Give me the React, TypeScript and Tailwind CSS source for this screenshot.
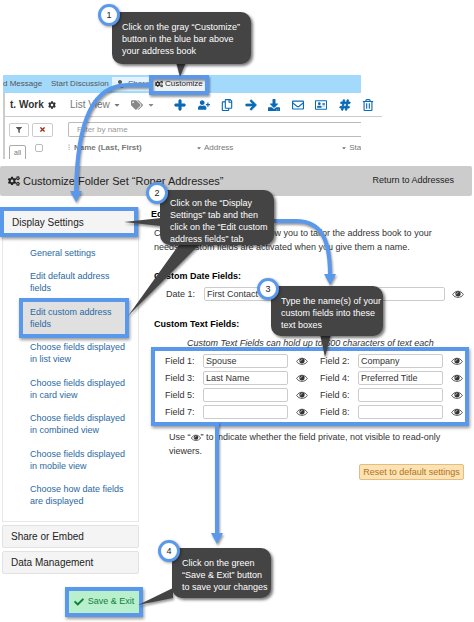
import {
  FaArrowRight,
  FaCaretDown,
  FaCheck,
  FaCog,
  FaCogs,
  FaDownload,
  FaFilter,
  FaHashtag,
  FaPlus,
  FaRegAddressCard,
  FaRegCopy,
  FaRegEnvelope,
  FaRegTrashAlt,
  FaTags,
  FaTimes,
  FaUser,
  FaUserPlus,
} from "react-icons/fa"
import clsx from "clsx"
import type { ReactNode } from "react"

const tools = [
  { label: "Add", icon: FaPlus, bold: true },
  { label: "Add person", icon: FaUserPlus },
  { label: "Copy", icon: FaRegCopy },
  { label: "Move", icon: FaArrowRight, bold: true },
  { label: "Download", icon: FaDownload },
  { label: "Email", icon: FaRegEnvelope },
  { label: "Card", icon: FaRegAddressCard },
  { label: "Number", icon: FaHashtag, bold: true },
  { label: "Delete", icon: FaRegTrashAlt },
]

const settingsLinks = [
  ["General settings"],
  ["Edit default address", "fields"],
  ["Edit custom address", "fields"],
  ["Choose fields displayed", "in list view"],
  ["Choose fields displayed", "in card view"],
  ["Choose fields displayed", "in combined view"],
  ["Choose fields displayed", "in mobile view"],
  ["Choose how date fields", "are displayed"],
]

const textFields = ["Spouse", "Company", "Last Name", "Preferred Title", "", "", "", ""]

function Eye({ className }: { className?: string }) {
  return (
    <svg viewBox="0 256 1792 1408" fill="none" className={clsx("shrink-0", className)}>
      <path d="M64 960C240 660 550 448 896 448s656 212 832 512c-176 300-486 448-832 448S240 1260 64 960z" stroke="currentColor" strokeWidth="128" />
      <circle cx="896" cy="860" r="410" fill="currentColor" />
      <path d="M690 860c0-120 90-206 206-206" stroke="#fff" strokeWidth="110" strokeLinecap="round" />
    </svg>
  )
}

function AddressBook() {
  return (
    <section className="ml-[3px] h-[84px] w-4/5 text-[#555]">
      <div className="mr-[21px] flex h-[18px] items-center bg-[#a3dafb] text-[8px] whitespace-nowrap">
        <button className="w-12 overflow-hidden text-left">d Message</button>
        <button className="w-[61px] text-left">Start Discussion</button>
        <button className="flex h-[14px] w-[37px] items-center gap-1 bg-[#e4f3fd] pl-1">
          <FaUser className="size-2 shrink-0" />
          Share
        </button>
        <button className="ml-[2px] flex h-[14px] items-center gap-[2px] bg-[#eef2f5] px-1 text-[#222]">
          <FaCogs className="size-2" />
          Customize
        </button>
      </div>
      <div className="flex h-6 items-center border-b border-l-2 border-[#ccc] pl-[5px]">
        <h2 className="flex w-[60px] items-center gap-1 text-[10px] font-bold whitespace-nowrap text-[#333]">
          t. Work <FaCog className="size-2" />
        </h2>
        <button className="flex w-[61px] items-center gap-[3px] text-[10px] whitespace-nowrap text-[#777]">
          List View <FaCaretDown className="size-2" />
        </button>
        <button aria-label="Tags" className="flex w-[43px] items-center gap-1 text-[#888]">
          <FaTags className="size-3" />
          <FaCaretDown className="size-2" />
        </button>
        <div className="flex flex-1 items-center justify-between pr-2 text-[#0a6ab6]">
          {tools.map(({ label, icon: Icon, bold }) => (
            <button key={label} aria-label={label}>
              <Icon className={clsx("size-3", bold && "stroke-[36]")} />
            </button>
          ))}
        </div>
      </div>
      <div className="mr-[21px] border-l-2 border-[#ccc]">
        <div className="flex h-[25px] items-center pl-1">
          <button aria-label="Filter" className="flex h-[14px] w-5 items-center justify-center rounded-[2px] border border-[#ccc]">
            <FaFilter className="size-[6px]" />
          </button>
          <button aria-label="Clear filter" className="ml-[3px] flex h-[14px] w-[21px] items-center justify-center rounded-[2px] border border-[#ccc] text-[#a32d12]">
            <FaTimes className="size-[7px]" />
          </button>
          <input
            aria-label="Filter by name"
            placeholder="Filter by name"
            className="ml-[15px] h-[15px] min-w-0 flex-1 rounded-l-[2px] border border-r-0 border-[#bbb] px-2 text-[8px] placeholder:text-[#999]"
          />
        </div>
        <div className="flex h-[17px] overflow-hidden pl-1 text-[8px] leading-3 whitespace-nowrap text-[#777]">
          <button className="mt-[3px] h-4 w-[17px] rounded-t-[2px] border border-[#aaa] text-[7px] leading-3">all</button>
          <input type="checkbox" aria-label="Select all" className="mt-[2px] ml-[9px] size-2 appearance-none rounded-[2px] border border-[#bbb]" />
          <span className="ml-[25px] flex w-32 gap-1 font-bold">
            <i className="font-normal not-italic">⁝</i>Name (Last, First)
          </span>
          <span className="flex flex-1 items-center gap-[2px] self-start">
            <FaCaretDown className="size-[6px]" />
            Address
          </span>
          <span className="flex items-center gap-[2px] self-start">
            <FaCaretDown className="size-[6px]" />
            Sta
          </span>
        </div>
      </div>
    </section>
  )
}

function Sidebar() {
  return (
    <aside className="flex w-[137px] shrink-0 flex-col gap-[3px]">
      <div className="flex flex-col border-x border-b border-[#e8e8e8]">
        <h2 className="-ml-[3px] flex h-[30px] items-center border-[4px] border-[#5a98ec] bg-[#f4f4f4] pl-2 text-[10px] text-[#222] shadow-[1px_2px_3px_#0006]">
          Display Settings
        </h2>
        <nav className="flex h-[284px] flex-col justify-between pt-[10px] pb-[14px] text-[9px] leading-3 whitespace-nowrap text-[#2a69a3]">
          {settingsLinks.map((lines, i) => (
            <a
              key={lines.join(" ")}
              href="#"
              className={clsx(
                i === 2
                  ? "-my-2 ml-4 w-[110px] border-[4px] border-[#5a98ec] bg-[#e0e0e0] py-1 pl-[7px] shadow-[1px_2px_3px_#0006]"
                  : "ml-[27px]"
              )}
            >
              {lines.map((line) => (
                <span key={line} className="block">{line}</span>
              ))}
            </a>
          ))}
        </nav>
      </div>
      {["Share or Embed", "Data Management"].map((title) => (
        <h2 key={title} className="flex h-[23px] items-center rounded-[2px] border border-[#e2e2e2] bg-[#f4f4f4] pl-2 text-[10px] text-[#222]">
          {title}
        </h2>
      ))}
    </aside>
  )
}

const inputClass = "h-[14px] min-w-0 rounded-[2px] border border-[#ccc] bg-white pl-[2px] text-[9px] text-[#333]"

function FieldsForm() {
  return (
    <form className="min-w-0 flex-1 pr-[5px] pl-3 text-[9px] leading-[14px] whitespace-nowrap text-[#333]">
      <h3 className="font-bold text-black">Edit</h3>
      <p className="mt-[5px] pl-[3px]">
        Custom address fields will allow you to tailor the address book to your
        <br />
        needs. Custom fields are activated when you give them a name.
      </p>
      <h3 className="mt-[15px] pl-[3px] font-bold text-black">Custom Date Fields:</h3>
      <div className="mt-1 flex items-center pr-[5px] pl-[15px]">
        <label htmlFor="date1" className="w-[38px]">Date 1:</label>
        <input id="date1" defaultValue="First Contact" className={clsx(inputClass, "flex-1")} />
        <Eye className="ml-[7px] h-[9px] w-3" />
      </div>
      <h3 className="mt-4 pl-[3px] font-bold text-black">Custom Text Fields:</h3>
      <p className="mt-[5px] pl-9 italic">Custom Text Fields can hold up to 500 characters of text each</p>
      <div className="-mt-[3px] grid grid-cols-2 gap-x-3 gap-y-[3px] border-[4px] border-[#5a98ec] py-[3px] pr-[2px] pl-[10px] shadow-[1px_2px_3px_#0006]">
        {textFields.map((value, i) => (
          <div key={i} className="flex items-center">
            <label htmlFor={`field${i + 1}`} className="w-[38px]">Field {i + 1}:</label>
            <input id={`field${i + 1}`} defaultValue={value} className={clsx(inputClass, "w-0 flex-1")} />
            <Eye className="ml-2 h-[9px] w-3" />
          </div>
        ))}
      </div>
      <p className="mt-[4px] pl-[18px]">
        Use “<Eye className="inline h-2 w-[10px]" />” to indicate whether the field private, not visible to read-only
        <br />
        viewers.
      </p>
      <div className="mt-[6px] flex justify-end pr-[5px]">
        <button type="button" className="h-4 w-[105px] rounded-[2px] border border-[#e3bd80] bg-[#fde2b3] text-[9px] leading-[14px] text-[#b0741c]">
          Reset to default settings
        </button>
      </div>
    </form>
  )
}

function Callout({ step, className, children }: { step: number; className: string; children: ReactNode }) {
  return (
    <div className={clsx("absolute rounded-[10px] rounded-tl-none bg-[#444] pl-[10px] text-[9px] leading-3 whitespace-nowrap text-white shadow-[2px_2px_3px_#0008]", className)}>
      <span className="absolute -top-2 -left-[14px] flex size-[22px] items-center justify-center rounded-full border-[3px] border-[#5a98ec] bg-white text-[9px] text-[#222] shadow-[1px_1px_3px_#0006]">
        {step}
      </span>
      {children}
    </div>
  )
}

function Arrows() {
  return (
    <svg width="474" height="622" className="pointer-events-none absolute top-0 left-0 drop-shadow-[1px_2px_1px_#0006]">
      <g fill="none" stroke="#5a98ec" strokeWidth="4">
        <path d="M151 85H128C95 85 77 116 76 193" />
        <path d="M274 221H296C323 221 330 242 330 276" />
        <path d="M217 422V535" />
        <rect x="151" y="77" width="56" height="16" />
      </g>
      <path d="M70 191H82L76 202ZM324 274H336L330 285ZM211 533H223L217 544Z" fill="#5a98ec" />
      <path d="M176 62H186L180 77ZM161 218V226L124 222ZM181 242H202L128 316ZM320 334H331L325 357ZM173 588V598L138 605Z" fill="#444" />
    </svg>
  )
}

export default function App() {
  return (
    <div className="relative overflow-hidden bg-white pt-[75px] pb-[6px] font-['Liberation_Sans',sans-serif]">
      <AddressBook />
      <header className="mt-[7px] mr-[2px] flex h-[30px] items-center justify-between rounded-[2px] bg-[#ccc] pr-[18px] pl-2 text-[9px] text-[#222]">
        <h1 className="flex items-center gap-[3px] text-[11px]">
          <FaCogs className="size-3" />
          Customize Folder Set “Roper Addresses”
        </h1>
        <a href="#">Return to Addresses</a>
      </header>
      <main className="flex pt-[11px] pl-[2px]">
        <Sidebar />
        <FieldsForm />
      </main>
      <button className="mt-[13px] ml-[65px] flex h-[30px] w-[78px] items-center justify-center gap-1 border-[4px] border-[#5a98ec] bg-[#b8efcd] text-[9px] whitespace-nowrap text-[#15803d] shadow-[1px_2px_3px_#0006]">
        <FaCheck className="size-[10px]" />
        Save &amp; Exit
      </button>
      <Arrows />
      <Callout step={1} className="top-3 left-28 h-[52px] w-[139px] pt-[9px]">
        Click on the gray “Customize”
        <br />
        button in the blue bar above
        <br />
        your address book
      </Callout>
      <Callout step={2} className="top-[190px] left-40 h-[55px] w-[114px] pt-[7px]">
        Click on the “Display
        <br />
        Settings” tab and then
        <br />
        click on the “Edit custom
        <br />
        address fields” tab
      </Callout>
      <Callout step={3} className="top-[286px] left-[271px] h-[50px] w-28 pt-[9px]">
        Type the name(s) of your
        <br />
        custom fields into these
        <br />
        text boxes
      </Callout>
      <Callout step={4} className="top-[548px] left-[172px] h-[50px] w-[99px] pt-[9px]">
        Click on the green
        <br />
        “Save &amp; Exit” button
        <br />
        to save your changes
      </Callout>
    </div>
  )
}
